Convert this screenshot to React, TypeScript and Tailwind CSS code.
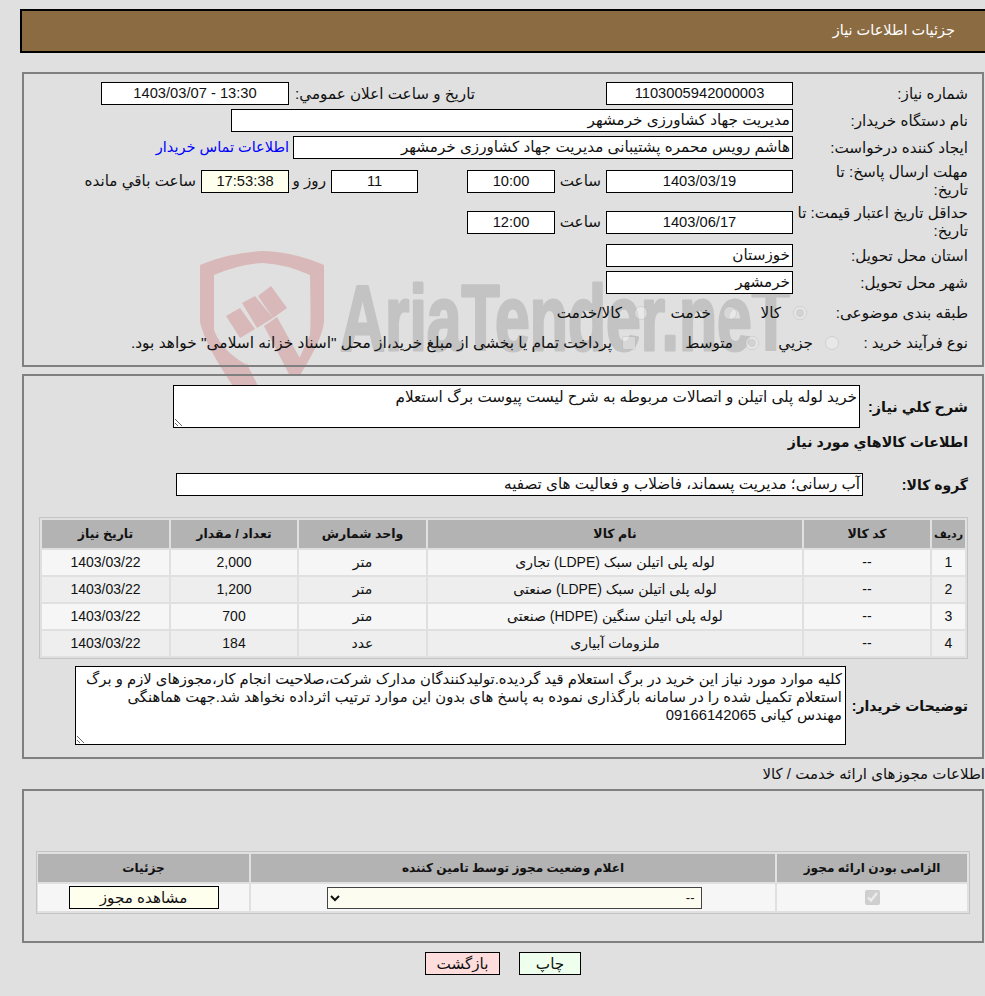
const FONT = "font-['Liberation_Sans','DejaVu_Sans',sans-serif]"

const rows = [
  { id: "1", name: "لوله پلی اتیلن سبک (LDPE) تجاری", unit: "متر", qty: "2,000", date: "1403/03/22" },
  { id: "2", name: "لوله پلی اتیلن سبک (LDPE) صنعتی", unit: "متر", qty: "1,200", date: "1403/03/22" },
  { id: "3", name: "لوله پلی اتیلن سنگین (HDPE) صنعتی", unit: "متر", qty: "700", date: "1403/03/22" },
  { id: "4", name: "ملزومات آبیاری", unit: "عدد", qty: "184", date: "1403/03/22" },
]

const notes =
  "کلیه موارد مورد نیاز این خرید در برگ استعلام قید گردیده.تولیدکنندگان مدارک شرکت،صلاحیت انجام کار،مجوزهای لازم و برگ\nاستعلام تکمیل شده را در سامانه بارگذاری نموده به پاسخ های بدون این موارد ترتیب اثرداده نخواهد شد.جهت هماهنگی\nمهندس کیانی 09166142065"

function Box({ children, className = "" }: { children?: React.ReactNode; className?: string }) {
  return (
    <div className={"h-[23px] border border-black bg-white flex items-center justify-center shrink-0 whitespace-nowrap " + className}>
      {children}
    </div>
  )
}

function Label({ children, className = "" }: { children: React.ReactNode; className?: string }) {
  return <div className={"shrink-0 text-[15.2px] leading-[18px] " + className}>{children}</div>
}

function Radio({ checked, className = "" }: { checked?: boolean; className?: string }) {
  return (
    <input
      type="radio"
      disabled
      readOnly
      checked={!!checked}
      className={"w-[14px] h-[14px] m-0 shrink-0 opacity-60 " + className}
    />
  )
}

function Watermark() {
  return (
    <svg dir="ltr" className="absolute left-0 top-0 pointer-events-none" width="985" height="400" viewBox="0 0 985 400">
      <path
        fillRule="evenodd"
        fill="#d8b8b8"
        d="M200 265 Q232 252 263 251 Q294 252 324 265 L324 322 Q322 340 300 375 L290 376 L293 372 L310 335 Q311 325 310 275 Q285 264 263 263 Q240 264 214 275 L214 330 Q222 352 249 366 L246 362 L258 386 L233 386 Q205 345 200 322 Z"
      />
      <path fill="#d8b8b8" d="M226 316 L240 308 L255 329 L240 338 Z" />
      <path fill="#d8b8b8" d="M242 303 L255 296 L273 318 L257 328 Z" />
      <path fill="#d8b8b8" d="M258 296 L271 286 L287 308 L273 318 Z" />
      <path fill="#d8b8b8" d="M264 326 L277 317 L302 362 L290 376 Z" />
      <text
        x="340"
        y="350"
        direction="ltr"
        textLength="450"
        lengthAdjust="spacingAndGlyphs"
        fill="#c3c3c3"
        stroke="#c3c3c3"
        strokeWidth="3"
        strokeLinejoin="round"
        fontSize="92"
        fontWeight="700"
        fontFamily="'Liberation Sans', sans-serif"
      >
        AriaTender.neT
      </text>
    </svg>
  )
}

function Table() {
  const cols = "grid-cols-[33px_126px_374px_127px_126px_127px]"
  return (
    <div className={"w-[929px] border border-[#c4c4c4] p-[2px] grid gap-[2px] text-[14px] " + cols}>
      {["ردیف", "کد کالا", "نام کالا", "واحد شمارش", "تعداد / مقدار", "تاریخ نیاز"].map((h, i) => (
        <div
          key={h}
          className={"h-[28px] bg-[#b3b3b3] font-bold flex items-center justify-center whitespace-nowrap " + (i === 0 ? "text-[11px]" : "text-[12.5px]")}
        >
          {h}
        </div>
      ))}
      {rows.map((r, i) => {
        const bg = i % 2 === 0 ? "bg-[#f6f6f6]" : "bg-[#eeeeee]"
        return [r.id, "--", r.name, r.unit, r.qty, r.date].map((v, j) => (
          <div key={i + "-" + j} className={"h-[25px] flex items-center justify-center " + bg}>
            {v}
          </div>
        ))
      })}
    </div>
  )
}

export default function App() {
  return (
    <div dir="rtl" className={"relative w-[985px] h-[996px] overflow-hidden bg-[#e0e0e0] text-[#111] text-[15.2px] " + FONT}>
      <Watermark />
      <div className="relative pt-[9px]">
        <div className="ml-[20px] h-[44px] border-2 border-r-0 border-black bg-[#8b6b42] text-white flex items-center pr-[30px] text-[14.5px]">
          جزئیات اطلاعات نیاز
        </div>

        {/* main info */}
        <div className="ml-[22px] mr-[1px] mt-[19px] h-[295px] border-2 border-[#808080] pt-[8px] pr-[14px]">
          <div className="flex items-center h-[23px]">
            <Label className="w-[175px]">شماره نیاز:</Label>
            <Box className="w-[187px] text-[14.7px]">1103005942000003</Box>
            <Label className="w-[186px] mr-[131px]">تاریخ و ساعت اعلان عمومي:</Label>
            <Box className="w-[188px] text-[14.7px]">13:30 - 1403/03/07</Box>
          </div>
          <div className="flex items-center h-[23px] mt-[4px]">
            <Label className="w-[175px]">نام دستگاه خریدار:</Label>
            <Box className="w-[562px] !justify-start pr-[2px]">مدیریت جهاد کشاورزی خرمشهر</Box>
          </div>
          <div className="flex items-center h-[23px] mt-[4px]">
            <Label className="w-[175px]">ایجاد کننده درخواست:</Label>
            <Box className="w-[500px] !justify-start pr-[2px]">هاشم رویس محمره پشتیبانی مدیریت جهاد کشاورزی خرمشهر</Box>
            <a href="#" className="mr-[4px] text-[#0000ff] text-[14.5px]">اطلاعات تماس خریدار</a>
          </div>
          <div className="flex items-center h-[40px] mt-[2px]">
            <Label className="w-[175px] pl-[7px]">مهلت ارسال پاسخ: تا تاریخ:</Label>
            <Box className="w-[187px] text-[14.7px]">1403/03/19</Box>
            <Label className="w-[51px] pr-[5px]">ساعت</Label>
            <Box className="w-[88px] text-[14.7px]">10:00</Box>
            <Box className="w-[87px] mr-[49px] text-[14.7px]">11</Box>
            <Label className="w-[42px] pr-[5px]">روز و</Label>
            <Box className="w-[88px] !bg-[#ffffee] text-[14.7px]">17:53:38</Box>
            <Label className="pr-[5px]">ساعت باقي مانده</Label>
          </div>
          <div className="flex items-center h-[40px] mt-[1px]">
            <Label className="w-[175px] pl-[4px]">حداقل تاریخ اعتبار قیمت: تا تاریخ:</Label>
            <Box className="w-[187px] text-[14.7px]">1403/06/17</Box>
            <Label className="w-[51px] pr-[5px]">ساعت</Label>
            <Box className="w-[88px] text-[14.7px]">12:00</Box>
          </div>
          <div className="flex items-center h-[23px] mt-[2px]">
            <Label className="w-[175px]">استان محل تحویل:</Label>
            <Box className="w-[187px] !justify-start pr-[2px]">خوزستان</Box>
          </div>
          <div className="flex items-center h-[23px] mt-[4px]">
            <Label className="w-[175px]">شهر محل تحویل:</Label>
            <Box className="w-[187px] !justify-start pr-[2px]">خرمشهر</Box>
          </div>
          <div className="flex items-center h-[30px] mt-[4px]">
            <Label className="w-[161px]">طبقه بندی موضوعی:</Label>
            <div className="w-[70px] flex items-center gap-[12px]"><Radio checked />کالا</div>
            <div className="w-[89px] flex items-center gap-[12px]"><Radio />خدمت</div>
            <div className="flex items-center gap-[12px]"><Radio />کالا/خدمت</div>
          </div>
          <div className="flex items-center h-[30px]">
            <Label className="w-[129px]">نوع فرآیند خرید :</Label>
            <div className="w-[80px] flex items-center gap-[12px]"><Radio />جزیي</div>
            <div className="w-[123px] flex items-center gap-[12px]"><Radio checked />متوسط</div>
            <div className="flex items-center gap-[10px] whitespace-nowrap text-[15.45px]">
              <input type="checkbox" disabled className="w-[14px] h-[14px] m-0 opacity-60 shrink-0" />
              پرداخت تمام یا بخشی از مبلغ خرید،از محل "اسناد خزانه اسلامی" خواهد بود.
            </div>
          </div>
        </div>

        {/* goods */}
        <div className="ml-[22px] mr-[1px] mt-[7px] h-[385px] border-2 border-[#808080] pt-[9px] pr-[14px]">
          <div className="flex items-center h-[43px]">
            <Label className="w-[108px] font-bold !text-[14.4px]">شرح كلي نياز:</Label>
            <textarea
              readOnly
              dir="rtl"
              defaultValue="خرید لوله پلی اتیلن و اتصالات مربوطه به شرح لیست پیوست برگ استعلام"
              className="w-[687px] h-[43px] border border-black bg-white px-[2px] py-[2px] text-[15.2px] leading-[18px] resize outline-none"
            />
          </div>
          <div className="flex items-center h-[30px] font-bold text-[14.2px]">اطلاعات کالاهاي مورد نياز</div>
          <div className="flex items-center h-[23px] mt-[15px]">
            <Label className="w-[105px] font-bold !text-[14px]">گروه کالا:</Label>
            <Box className="w-[687px] !justify-start pr-[2px]">آب رسانی؛ مدیریت پسماند، فاضلاب و فعالیت های تصفیه</Box>
          </div>
          <div className="mt-[21px]">
            <Table />
          </div>
          <div className="flex items-center h-[79px] mt-[7px]">
            <Label className="w-[122px] font-bold !text-[14px]">توضیحات خریدار:</Label>
            <textarea
              readOnly
              dir="rtl"
              defaultValue={notes}
              className="w-[771px] h-[79px] border border-black bg-white pl-[2px] pr-[3px] pt-[3px] text-[14.8px] leading-[18px] resize outline-none"
            />
          </div>
        </div>

        <div className="h-[30px] flex items-center text-[15px] whitespace-nowrap">اطلاعات مجوزهای ارائه خدمت / کالا</div>

        {/* permits */}
        <div className="ml-[22px] mr-[1px] h-[154px] border-2 border-[#808080] pt-[60px] pr-[12px]">
          <div className="w-[934px] border border-[#c4c4c4] p-[2px] grid grid-cols-[190px_524px_211px] gap-[2px]">
            {["الزامی بودن ارائه مجوز", "اعلام وضعیت مجوز توسط تامین کننده", "جزئیات"].map((h) => (
              <div key={h} className="h-[28px] bg-[#b3b3b3] font-bold text-[12.1px] flex items-center justify-center">
                {h}
              </div>
            ))}
            <div className="h-[27px] bg-[#f6f6f6] flex items-center justify-center">
              <input type="checkbox" checked disabled readOnly className="w-[15px] h-[15px] m-0" />
            </div>
            <div className="h-[27px] bg-[#f6f6f6] flex items-center justify-center">
              <select className="w-[375px] h-[22px] border border-[#444] bg-[#fcfcf0] text-[13px] pr-[2px] ml-[2px]">
                <option>--</option>
              </select>
            </div>
            <div className="h-[27px] bg-[#f6f6f6] flex items-center justify-center">
              <button className="w-[150px] h-[23px] border border-black bg-[#ffffee] text-[15.2px]">مشاهده مجوز</button>
            </div>
          </div>
        </div>

        <div className="flex justify-center gap-[19px] mt-[9px] pl-[21px]">
          <button className="w-[62px] h-[23px] border border-black bg-[#eeffee] text-[15.2px]">چاپ</button>
          <button className="w-[75px] h-[23px] border border-black bg-[#ffdddd] text-[15.2px]">بازگشت</button>
        </div>
      </div>
    </div>
  )
}
